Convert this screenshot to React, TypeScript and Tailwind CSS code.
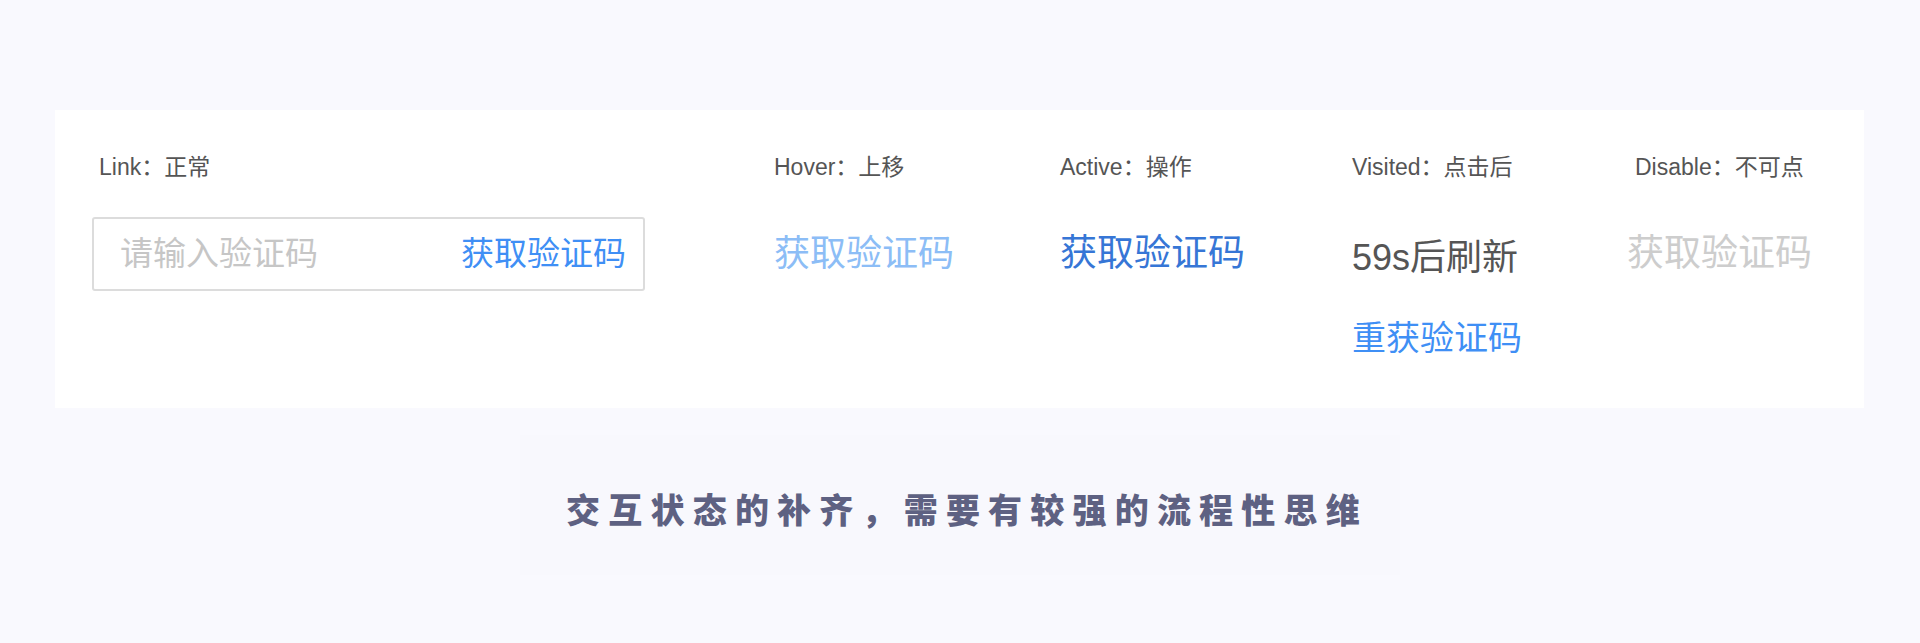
const FONT = "font-['Liberation_Sans','Noto_Sans_CJK_SC',sans-serif]";

function Label({ children, indent = "" }: { children: React.ReactNode; indent?: string }) {
  return (
    <div className={`h-[28px] pt-[2px] leading-[28px] text-[23px] text-[#555555] whitespace-nowrap ${indent}`}>
      {children}
    </div>
  );
}

export default function App() {
  return (
    <div className={`min-h-screen w-[1920px] bg-[#f9f9fe] pt-[110px] ${FONT}`}>
      {/* state card */}
      <div className="ml-[55px] flex h-[298px] w-[1809px] bg-white pl-[37px] pt-[41px]">
        {/* Link */}
        <div className="w-[682px]">
          <Label indent="pl-[7px]">Link：正常</Label>
          <div className="mt-[38px] flex h-[74px] w-[553px] items-center justify-between rounded-[3px] border-2 border-[#dcdcdc] pl-[26px] pr-[17px]">
            <span className="text-[33px] text-[#c6c6c6]">请输入验证码</span>
            <span className="text-[33px] text-[#3f8ff5]">获取验证码</span>
          </div>
        </div>

        {/* Hover */}
        <div className="w-[286px]">
          <Label>Hover：上移</Label>
          <div className="mt-[38px] flex h-[74px] items-center text-[36px] text-[#8cbdf6]">获取验证码</div>
        </div>

        {/* Active */}
        <div className="w-[292px]">
          <Label>Active：操作</Label>
          <div className="mt-[38px] flex h-[74px] items-center text-[37px] text-[#3676d6]">获取验证码</div>
        </div>

        {/* Visited */}
        <div className="w-[275px]">
          <Label>Visited：点击后</Label>
          <div className="mt-[38px] flex h-[74px] items-center pt-[7px] text-[36px] text-[#555555]">59s后刷新</div>
          <div className="mt-[22px] flex h-[48px] items-center pt-[2px] text-[34px] text-[#3f8ff5]">重获验证码</div>
        </div>

        {/* Disable */}
        <div className="flex-1">
          <Label indent="pl-[8px]">Disable：不可点</Label>
          <div className="mt-[38px] flex h-[74px] items-center text-[37px] text-[#cdcdcd]">获取验证码</div>
        </div>
      </div>

      {/* caption */}
      <div className="ml-[520px] mt-[27px] flex h-[140px] w-[880px] items-center justify-center bg-[#f8f8fd] pl-[14px] pt-[12px]">
        <span className="text-[34px] font-black tracking-[8.2px] text-[#5e6182]">
          交互状态的补齐，需要有较强的流程性思维
        </span>
      </div>
    </div>
  );
}
